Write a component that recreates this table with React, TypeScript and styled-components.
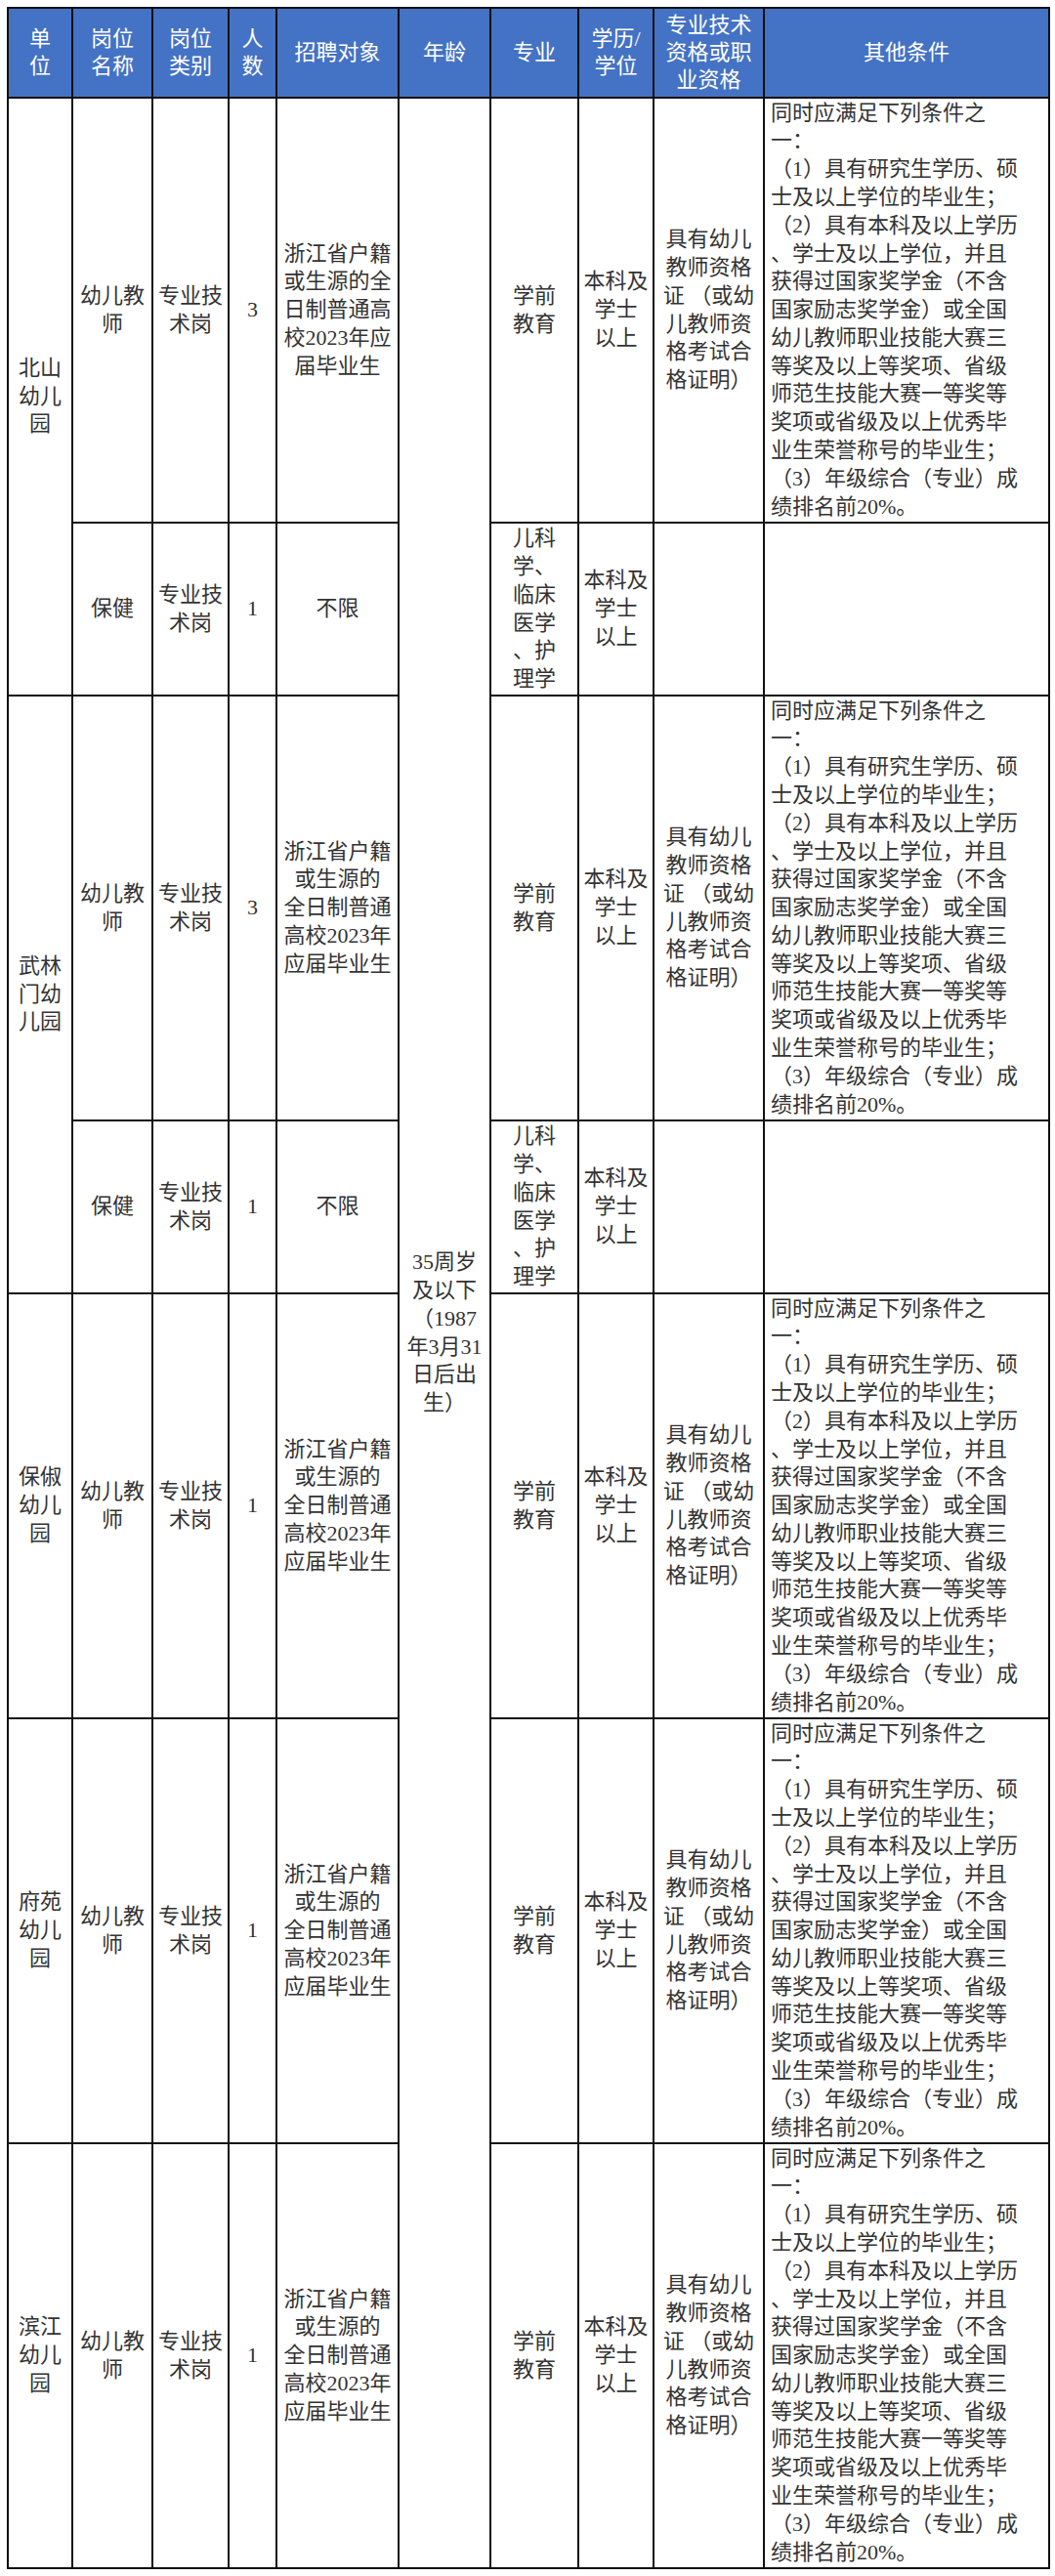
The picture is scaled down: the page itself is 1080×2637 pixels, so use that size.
import React from "react";
import styled, { createGlobalStyle } from "styled-components";

const GlobalStyle = createGlobalStyle`
  html, body {
    margin: 0;
    padding: 0;
    background: #ffffff;
  }
  body {
    font-family: "Liberation Serif", "Noto Sans CJK SC", serif;
  }
`;

const Page = styled.div`
  width: 1080px;
  min-height: 2637px;
  padding: 7px 0 0 7px;
  box-sizing: border-box;
  background: #ffffff;
`;

const Table = styled.table`
  border-collapse: collapse;
  table-layout: fixed;
  width: 1066px;
  font-family: "Liberation Serif", "Noto Sans CJK SC", serif;
`;

const Row = styled.tr<{ $h: number }>`
  height: ${(p) => p.$h}px;
`;

const HeadCell = styled.th`
  background: #4472c4;
  color: #ffffff;
  font-size: 22px;
  font-weight: 400;
  line-height: 28px;
  border: 2px solid #111111;
  text-align: center;
  vertical-align: middle;
  padding: 0;
  white-space: nowrap;
`;

const Cell = styled.td<{ $align?: "left" | "center" }>`
  border: 2px solid #111111;
  color: #333333;
  font-size: 22px;
  line-height: 28.8px;
  text-align: ${(p) => p.$align ?? "center"};
  vertical-align: middle;
  padding: 0 ${(p) => (p.$align === "left" ? "0 0 6px" : "0")};
  white-space: nowrap;
  overflow: hidden;
`;

const Line = styled.span`
  display: block;
`;

type Job = {
  post: string[];
  type: string[];
  count: string;
  target: string[];
  major: string[];
  degree: string[];
  qual: string[];
  other: string[];
  h: number;
};

type Unit = { name: string[]; jobs: Job[] };

const OTHER = [
  "同时应满足下列条件之",
  "一：",
  "（1）具有研究生学历、硕",
  "士及以上学位的毕业生；",
  "（2）具有本科及以上学历",
  "、学士及以上学位，并且",
  "获得过国家奖学金（不含",
  "国家励志奖学金）或全国",
  "幼儿教师职业技能大赛三",
  "等奖及以上等奖项、省级",
  "师范生技能大赛一等奖等",
  "奖项或省级及以上优秀毕",
  "业生荣誉称号的毕业生；",
  "（3）年级综合（专业）成",
  "绩排名前20%。",
];

const QUAL = ["具有幼儿", "教师资格", "证 （或幼", "儿教师资", "格考试合", "格证明）"];
const DEGREE = ["本科及", "学士", "以上"];
const TARGET_A = ["浙江省户籍", "或生源的全", "日制普通高", "校2023年应", "届毕业生"];
const TARGET_B = ["浙江省户籍", "或生源的", "全日制普通", "高校2023年", "应届毕业生"];

const teacher = (count: string, target: string[]): Job => ({
  post: ["幼儿教", "师"],
  type: ["专业技", "术岗"],
  count,
  target,
  major: ["学前", "教育"],
  degree: DEGREE,
  qual: QUAL,
  other: OTHER,
  h: 435,
});

const health = (): Job => ({
  post: ["保健"],
  type: ["专业技", "术岗"],
  count: "1",
  target: ["不限"],
  major: ["儿科", "学、", "临床", "医学", "、护", "理学"],
  degree: DEGREE,
  qual: [],
  other: [],
  h: 177,
});

const UNITS: Unit[] = [
  { name: ["北山", "幼儿", "园"], jobs: [teacher("3", TARGET_A), health()] },
  { name: ["武林", "门幼", "儿园"], jobs: [teacher("3", TARGET_B), health()] },
  { name: ["保俶", "幼儿", "园"], jobs: [teacher("1", TARGET_B)] },
  { name: ["府苑", "幼儿", "园"], jobs: [teacher("1", TARGET_B)] },
  { name: ["滨江", "幼儿", "园"], jobs: [teacher("1", TARGET_B)] },
];

const AGE = ["35周岁", "及以下", "（1987", "年3月31", "日后出", "生）"];

const COLS = [66, 82, 78, 49, 125, 94, 90, 77, 113, 292];

const Lines: React.FC<{ items: string[] }> = ({ items }) => (
  <>
    {items.map((t, i) => (
      <Line key={i}>{t}</Line>
    ))}
  </>
);

const HEAD: string[][] = [
  ["单", "位"],
  ["岗位", "名称"],
  ["岗位", "类别"],
  ["人", "数"],
  ["招聘对象"],
  ["年龄"],
  ["专业"],
  ["学历/", "学位"],
  ["专业技术", "资格或职", "业资格"],
  ["其他条件"],
];

export default function App() {
  const totalRows = UNITS.reduce((n, u) => n + u.jobs.length, 0);
  let rowIndex = 0;
  return (
    <Page>
      <GlobalStyle />
      <Table>
        <colgroup>
          {COLS.map((w, i) => (
            <col key={i} style={{ width: w }} />
          ))}
        </colgroup>
        <thead>
          <Row $h={92}>
            {HEAD.map((h, i) => (
              <HeadCell key={i}>
                <Lines items={h} />
              </HeadCell>
            ))}
          </Row>
        </thead>
        <tbody>
          {UNITS.map((u, ui) =>
            u.jobs.map((j, ji) => {
              const first = rowIndex === 0;
              rowIndex += 1;
              return (
                <Row $h={j.h} key={`${ui}-${ji}`}>
                  {ji === 0 && (
                    <Cell rowSpan={u.jobs.length}>
                      <Lines items={u.name} />
                    </Cell>
                  )}
                  <Cell>
                    <Lines items={j.post} />
                  </Cell>
                  <Cell>
                    <Lines items={j.type} />
                  </Cell>
                  <Cell>{j.count}</Cell>
                  <Cell>
                    <Lines items={j.target} />
                  </Cell>
                  {first && (
                    <Cell rowSpan={totalRows}>
                      <Lines items={AGE} />
                    </Cell>
                  )}
                  <Cell>
                    <Lines items={j.major} />
                  </Cell>
                  <Cell>
                    <Lines items={j.degree} />
                  </Cell>
                  <Cell>
                    <Lines items={j.qual} />
                  </Cell>
                  <Cell $align="left">
                    <Lines items={j.other} />
                  </Cell>
                </Row>
              );
            })
          )}
        </tbody>
      </Table>
    </Page>
  );
}
